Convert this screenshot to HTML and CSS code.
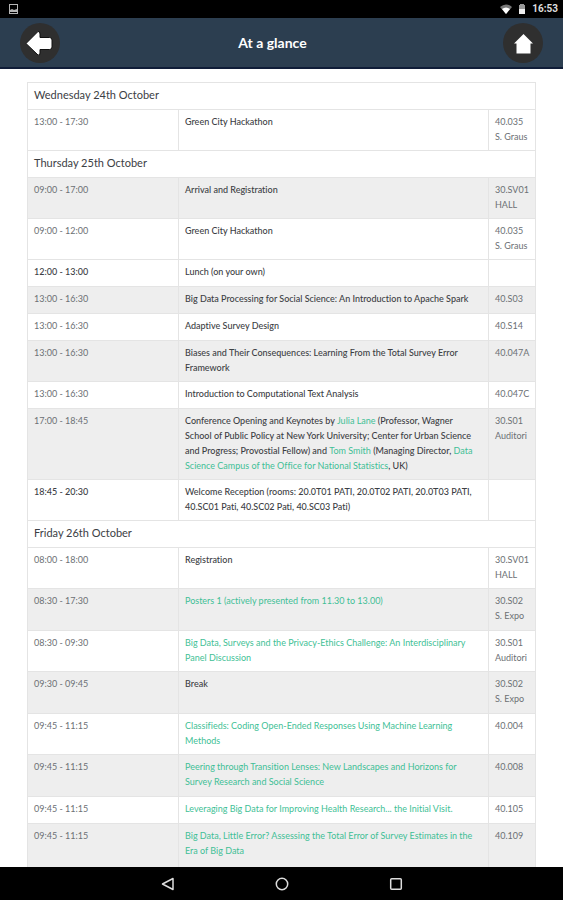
FILE: index.html
```html
<!DOCTYPE html>
<html lang="en">
<head>
<meta charset="utf-8">
<meta name="viewport" content="width=device-width, initial-scale=1">
<title>At a glance</title>
<link rel="stylesheet" href="styles.css">
</head>
<body>
<div class="status">
  <svg class="status-picture" width="10" height="10" viewBox="0 0 10 10" aria-hidden="true"><path fill="#b5b5b5" fill-rule="evenodd" d="M0 0h9v10H0zM1 1v5l2-1 2 1 3-1V1zM1 8v1h7V8z"/></svg>
  <svg width="12" height="10" viewBox="0 0 12 10" aria-hidden="true"><path fill="#777" d="M0 3Q6-2 12 3L6 10z"/><path fill="#fff" d="M2 5Q6 2 10 5L6 10z"/></svg>
  <svg width="8" height="10" viewBox="0 0 8 10" aria-hidden="true"><path fill="#999" d="M2 0h4v1h1v4H1V1h1z"/><path fill="#eee" d="M1 5h6v5H1z"/></svg>
  <span>16:53</span>
</div>
<header class="bar">
  <button class="round" type="button" aria-label="Back"><svg width="40" height="40" viewBox="0 0 40 40"><path fill="#fff" stroke="#111" stroke-width="1" d="M6 20.500L18 8.500Q20 8 20 11V14.500H29.500Q32 14.500 32 17V24Q32 26.500 29.500 26.500H20V30Q20 33 18 32z"/></svg></button>
  <h1>At a glance</h1>
  <button class="round" type="button" aria-label="Home"><svg width="40" height="40" viewBox="0 0 40 40"><path fill="#fff" d="M20.500 11L30 20.500H27.500V30.500H13.500V20.500H11z"/></svg></button>
</header>
<main>
<table>
<colgroup><col class="time"><col><col class="room"></colgroup>
<tbody>
<tr><th colspan="3">Wednesday 24th October</th></tr>
<tr><td>13:00 - 17:30</td><td>Green City Hackathon</td><td>40.035<br>S. Graus</td></tr>
<tr><th colspan="3">Thursday 25th October</th></tr>
<tr class="alt"><td>09:00 - 17:00</td><td>Arrival and Registration</td><td>30.SV01<br>HALL</td></tr>
<tr><td>09:00 - 12:00</td><td>Green City Hackathon</td><td>40.035<br>S. Graus</td></tr>
<tr class="own"><td>12:00 - 13:00</td><td>Lunch (on your own)</td><td></td></tr>
<tr class="alt"><td>13:00 - 16:30</td><td>Big Data Processing for Social Science: An Introduction to Apache Spark</td><td>40.S03</td></tr>
<tr><td>13:00 - 16:30</td><td>Adaptive Survey Design</td><td>40.S14</td></tr>
<tr class="alt"><td>13:00 - 16:30</td><td>Biases and Their Consequences: Learning From the Total Survey Error Framework</td><td>40.047A</td></tr>
<tr><td>13:00 - 16:30</td><td>Introduction to Computational Text Analysis</td><td>40.047C</td></tr>
<tr class="alt"><td>17:00 - 18:45</td><td>Conference Opening and Keynotes by <a href="#">Julia Lane</a> (Professor, Wagner<br>School of Public Policy at New York University; Center for Urban Science<br>and Progress; Provostial Fellow) and <a href="#">Tom Smith</a> (Managing Director, <a href="#">Data Science Campus of the Office for National Statistics</a>, UK)</td><td>30.S01<br>Auditori</td></tr>
<tr class="own"><td>18:45 - 20:30</td><td>Welcome Reception (rooms: 20.0T01 PATI, 20.0T02 PATI, 20.0T03 PATI, 40.SC01 Pati, 40.SC02 Pati, 40.SC03 Pati)</td><td></td></tr>
</tbody>
<tbody class="sessions">
<tr><th colspan="3">Friday 26th October</th></tr>
<tr><td>08:00 - 18:00</td><td>Registration</td><td>30.SV01<br>HALL</td></tr>
<tr class="alt"><td>08:30 - 17:30</td><td><a href="#">Posters 1 (actively presented from 11.30 to 13.00)</a></td><td>30.S02<br>S. Expo</td></tr>
<tr><td>08:30 - 09:30</td><td><a href="#">Big Data, Surveys and the Privacy-Ethics Challenge: An Interdisciplinary Panel Discussion</a></td><td>30.S01<br>Auditori</td></tr>
<tr class="alt"><td>09:30 - 09:45</td><td>Break</td><td>30.S02<br>S. Expo</td></tr>
<tr><td>09:45 - 11:15</td><td><a href="#">Classifieds: Coding Open-Ended Responses Using Machine Learning Methods</a></td><td>40.004</td></tr>
<tr class="alt"><td>09:45 - 11:15</td><td><a href="#">Peering through Transition Lenses: New Landscapes and Horizons for Survey Research and Social Science</a></td><td>40.008</td></tr>
<tr><td>09:45 - 11:15</td><td><a href="#">Leveraging Big Data for Improving Health Research... the Initial Visit.</a></td><td>40.105</td></tr>
<tr class="alt last"><td>09:45 - 11:15</td><td><a href="#">Big Data, Little Error? Assessing the Total Error of Survey Estimates in the Era of Big Data</a></td><td>40.109</td></tr>
</tbody>
</table>
</main>
<nav aria-label="System">
  <button type="button" aria-label="Back"><svg width="14" height="14" viewBox="0 0 14 14"><path fill="none" stroke="#ddd" stroke-width="1.500" stroke-linejoin="round" d="M12 1.500v11L1.500 7z"/></svg></button>
  <button type="button" aria-label="Home"><svg width="14" height="14" viewBox="0 0 14 14"><circle cx="7" cy="7" r="5.700" fill="none" stroke="#ddd" stroke-width="1.500"/></svg></button>
  <button type="button" aria-label="Recent apps"><svg width="14" height="14" viewBox="0 0 14 14"><rect x="1.700" y="1.700" width="10.600" height="10.600" rx="1" fill="none" stroke="#ddd" stroke-width="1.500"/></svg></button>
</nav>
</body>
</html>
```
FILE: styles.css
```css
* { box-sizing: border-box; }

body {
  margin: 0;
  height: 100vh;
  display: flex;
  flex-direction: column;
  overflow: hidden;
  background: #fff;
  font-family: Lato, "Liberation Sans", sans-serif;
  font-variant-ligatures: none;
  color: #3c4044;
}

button {
  border: 0;
  padding: 0;
  background: none;
  display: flex;
}

.status {
  flex: none;
  height: 18px;
  padding: 0 5px 0 9px;
  display: flex;
  align-items: center;
  gap: 6px;
  background: #000;
  color: #ddd;
  font: bold 10px/18px Roboto, sans-serif;
}

.status-picture { margin-right: auto; }

.bar {
  flex: none;
  height: 51px;
  padding: 0 20px;
  display: flex;
  align-items: center;
  justify-content: space-between;
  background: #2c3e50;
  border-bottom: 2px solid #101d38;
}

.bar h1 {
  margin: 0;
  padding-right: 18px;
  font-size: 14px;
  line-height: 20px;
  font-weight: 700;
  color: #fff;
}

.round {
  border-radius: 50%;
  background: #2f2f2f;
}

main {
  flex: 1;
  min-height: 0;
  overflow: hidden;
  padding: 13px 27px 0;
}

table {
  width: 100%;
  table-layout: fixed;
  border-collapse: collapse;
  font-size: 9px;
  line-height: 15px;
}

.time { width: 151px; }
.room { width: 47px; }

th,
td {
  height: 27px;
  padding: 4px 5px 6px 6px;
  border: 1px solid #e4e4e4;
  text-align: left;
  vertical-align: top;
}

th {
  font-size: 11px;
  font-weight: 400;
}

td:nth-child(2) { font-weight: 500; }
td:nth-child(odd) { color: #6c7074; }
.own td:first-child { color: #3c4044; font-weight: 500; }
td:last-child { padding-right: 0; }

.alt td { background: #eee; }
.sessions .alt td { padding-bottom: 7px; }
.sessions .last td { height: 57px; }

a {
  color: #3fbf96;
  font-weight: 400;
  text-decoration: none;
}

nav {
  flex: none;
  height: 33px;
  display: flex;
  align-items: center;
  justify-content: center;
  gap: 100px;
  background: #000;
}
```
